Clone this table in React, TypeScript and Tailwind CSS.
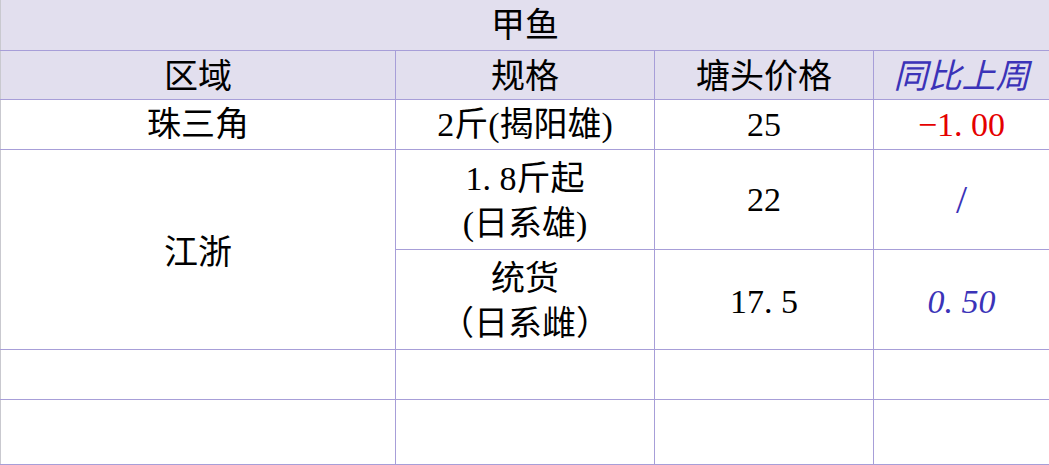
import React from "react";

const line = "border border-[#a79ed8]";

function Num({ text }: { text: string }) {
    // SimSun-style digits: the dot takes a full digit width
    const parts = text.split(".");
    return (
        <span>
            {parts.map((p, i) => (
                <React.Fragment key={i}>
                    {p}
                    {i < parts.length - 1 && <span className="inline-block w-[0.5em] text-left">.</span>}
                </React.Fragment>
            ))}
        </span>
    );
}

export default function App() {
    return (
        <div className="w-[1049px] h-[465px] bg-white overflow-hidden font-['Liberation_Serif','Noto_Sans_CJK_SC',serif] text-black">
            <table className="w-[1049px] table-fixed border-collapse text-[34px] leading-[45px] text-center">
                <colgroup>
                    <col className="w-[395px]" />
                    <col className="w-[259px]" />
                    <col className="w-[219px]" />
                    <col className="w-[176px]" />
                </colgroup>
                <tbody>
                    <tr className="h-[50px] bg-[#e2dfee]">
                        <td colSpan={4} className="border-b border-r border-[#a79ed8] border-l-[#c9c9cf] border-l pt-[2px]">
                            甲鱼
                        </td>
                    </tr>
                    <tr className="h-[49px] bg-[#e2dfee]">
                        <td className={`${line} border-l-[#c9c9cf] pt-[3px]`}>区域</td>
                        <td className={`${line} pt-[3px]`}>规格</td>
                        <td className={`${line} pt-[3px]`}>塘头价格</td>
                        <td className={`${line} pt-[3px] italic text-[#3b33b8]`}>同比上周</td>
                    </tr>
                    <tr className="h-[50px]">
                        <td className={`${line} border-l-[#c9c9cf]`}>珠三角</td>
                        <td className={line}>2斤(揭阳雄)</td>
                        <td className={line}>25</td>
                        <td className={`${line} text-[#e50000]`}>
                            −<Num text="1.00" />
                        </td>
                    </tr>
                    <tr className="h-[100px]">
                        <td rowSpan={2} className={`${line} border-l-[#c9c9cf] pt-[6px]`}>江浙</td>
                        <td className={`${line} pt-[4px]`}>
                            <div><Num text="1.8" />斤起</div>
                            <div>(日系雄)</div>
                        </td>
                        <td className={line}>22</td>
                        <td className={`${line} text-[40px] font-light text-[#3b33b8]`}>/</td>
                    </tr>
                    <tr className="h-[100px]">
                        <td className={`${line} pt-[4px]`}>
                            <div>统货</div>
                            <div>（日系雌）</div>
                        </td>
                        <td className={`${line} pt-[4px]`}>
                            <Num text="17.5" />
                        </td>
                        <td className={`${line} pt-[4px] italic text-[#3b33b8]`}>
                            <Num text="0.50" />
                        </td>
                    </tr>
                    <tr className="h-[50px]">
                        <td className={`${line} border-l-[#c9c9cf]`}></td>
                        <td className={line}></td>
                        <td className={line}></td>
                        <td className={line}></td>
                    </tr>
                    <tr className="h-[65px]">
                        <td className={`${line} border-l-[#c9c9cf]`}></td>
                        <td className={line}></td>
                        <td className={line}></td>
                        <td className={line}></td>
                    </tr>
                </tbody>
            </table>
        </div>
    );
}
